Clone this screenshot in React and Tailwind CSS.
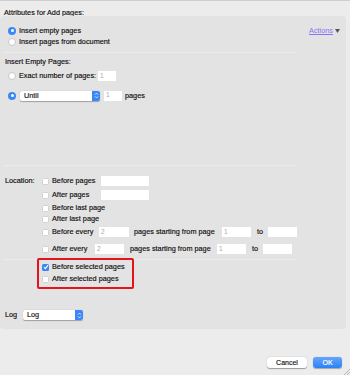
import React from "react";

const Radio = ({ on }) =>
  on ? (
    <span className="w-[8px] h-[8px] rounded-full bg-[#3b87f7] flex items-center justify-center shrink-0">
      <span className="w-[3px] h-[3px] rounded-full bg-white" />
    </span>
  ) : (
    <span className="w-[8px] h-[8px] rounded-full bg-white border border-[#c8c8c8] shrink-0" />
  );

const Check = ({ on }) =>
  on ? (
    <span className="w-[7px] h-[7px] rounded-[1.5px] bg-[#3b87f7] flex items-center justify-center shrink-0">
      <svg width="6" height="6" viewBox="0 0 6 6">
        <path d="M1 3.2 L2.4 4.6 L5 1.2" stroke="white" strokeWidth="1.1" fill="none" />
      </svg>
    </span>
  ) : (
    <span className="w-[7px] h-[7px] rounded-[1.5px] bg-white border border-[#d2d2d2] shrink-0" />
  );

const Field = ({ className, v }) => (
  <span className={"h-[10px] bg-white flex items-center pl-[2px] text-[#a8a8a8] text-[6.5px] [-webkit-text-stroke:0px] shrink-0 " + className}>
    {v}
  </span>
);

const Stepper = () => (
  <span className="w-[8px] h-full rounded-r-[2px] bg-[#3b87f7] flex items-center justify-center shrink-0">
    <svg width="5" height="7" viewBox="0 0 5 7">
      <path d="M1 2.6 L2.5 1.1 L4 2.6 M1 4.4 L2.5 5.9 L4 4.4" stroke="white" strokeWidth="0.8" fill="none" />
    </svg>
  </span>
);

const Select = ({ className, label }) => (
  <span className={"h-[10px] bg-white rounded-[2px] shadow-[0_0.5px_1px_rgba(0,0,0,0.3)] flex items-center shrink-0 " + className}>
    <span className="flex-1 pl-[4px] text-[#111]">{label}</span>
    <Stepper />
  </span>
);

const Row = ({ className, children }) => (
  <div className={"flex items-center h-[10px] " + (className || "")}>{children}</div>
);

export default function App() {
  return (
    <div className="w-[350px] h-[375px] bg-[#ececec] border-t border-[#cfcfcf] flex flex-col font-['Liberation_Sans',Arial,sans-serif] text-[7.3px] text-[#0d0d0d] [-webkit-text-stroke:0.15px] leading-none relative overflow-hidden">
      <div className="h-[15px] pl-[4px] pt-[8px]">Attributes for Add pages:</div>

      <div className="w-[346px] h-[313px] bg-[#e3e3e3] rounded-[4px] pl-[4px] pt-[9px] flex flex-col">
        <div className="flex justify-between pr-[6px]">
          <div className="flex flex-col">
            <div className="flex items-center h-[11px] pl-[4px] gap-[3px]">
              <Radio on />
              <span>Insert empty pages</span>
            </div>
            <div className="flex items-center h-[11px] pl-[4px] gap-[3px]">
              <Radio />
              <span>Insert pages from document</span>
            </div>
          </div>
          <div className="flex items-center h-[11px] gap-[2px]">
            <span className="text-[#8a72f3] underline [-webkit-text-stroke:0px]">Actions</span>
            <svg width="5" height="4" viewBox="0 0 5 4">
              <path d="M0 0 L5 0 L2.5 4 Z" fill="#555" />
            </svg>
          </div>
        </div>

        <div className="mt-[5px] h-px w-[293px] bg-[#ebebeb]" />

        <Row className="mt-[4px] pl-[1px]">Insert Empty Pages:</Row>

        <Row className="mt-[4px] pl-[4px]">
          <Radio />
          <span className="ml-[3px] w-[79px]">Exact number of pages:</span>
          <Field className="w-[18px]" v="1" />
        </Row>

        <div className="mt-[9px] h-[11px] flex items-center pl-[4px]">
          <Radio on />
          <Select className="ml-[4px] w-[80px]" label="Until" />
          <Field className="ml-[4px] w-[18px] text-[#111]" v="1" />
          <span className="ml-[3px]">pages</span>
        </div>

        <div className="mt-[64px] h-px w-[293px] bg-[#ebebeb]" />

        <div className="mt-[10px] flex">
          <Row className="w-[38px] pl-[1px] shrink-0">Location:</Row>
          <div className="flex flex-col">
            <Row>
              <Check />
              <span className="ml-[3px] w-[49px]">Before pages</span>
              <Field className="w-[48px]" v="" />
            </Row>
            <Row className="mt-[4px]">
              <Check />
              <span className="ml-[3px] w-[49px]">After pages</span>
              <Field className="w-[48px]" v="" />
            </Row>
            <Row className="mt-[3px]">
              <Check />
              <span className="ml-[3px]">Before last page</span>
            </Row>
            <Row className="mt-[1px]">
              <Check />
              <span className="ml-[3px]">After last page</span>
            </Row>
            <Row className="mt-[3px]">
              <Check />
              <span className="ml-[3px] w-[47px]">Before every</span>
              <Field className="w-[30px]" v="2" />
              <span className="ml-[5px] w-[88px]">pages starting from page</span>
              <Field className="w-[29px]" v="1" />
              <span className="ml-[6px] w-[11px]">to</span>
              <Field className="w-[29px]" v="" />
            </Row>
            <Row className="mt-[7px]">
              <Check />
              <span className="ml-[3px] w-[43px]">After every</span>
              <Field className="w-[29px]" v="2" />
              <span className="ml-[6px] w-[87px]">pages starting from page</span>
              <Field className="w-[29px]" v="1" />
              <span className="ml-[6px] w-[11px]">to</span>
              <Field className="w-[29px]" v="" />
            </Row>
          </div>
        </div>

        <div className="mt-[5px] h-px w-[293px] bg-[#ebebeb]" />

        <div className="flex flex-col pl-[38px]">
          <Row className="mt-[2px]">
            <Check on />
            <span className="ml-[3px]">Before selected pages</span>
          </Row>
          <Row className="mt-[2px]">
            <Check />
            <span className="ml-[3px]">After selected pages</span>
          </Row>
        </div>

        <Row className="mt-[26px] pl-[1px]">
          <span className="w-[18px]">Log</span>
          <Select className="w-[60px]" label="Log" />
        </Row>
      </div>

      <div className="mt-[28px] flex justify-end gap-[6px] pr-[8px]">
        <button className="w-[40px] h-[11px] bg-white rounded-[3px] shadow-[0_0.5px_1px_rgba(0,0,0,0.35)] text-[#111] text-[7px] leading-none flex items-center justify-center">
          Cancel
        </button>
        <button className="w-[29px] h-[11px] bg-gradient-to-b from-[#63a6fa] to-[#2c80f6] rounded-[3px] shadow-[0_0.5px_1px_rgba(0,0,0,0.3)] text-white text-[7px] leading-none flex items-center justify-center">
          OK
        </button>
      </div>

      <div className="absolute left-[37px] top-[257px] w-[97px] h-[31px] border-2 border-[#e5131d] rounded-[2px]" />

      <svg className="absolute right-0 bottom-0" width="8" height="8" viewBox="0 0 8 8">
        <path d="M8 2 L2 8 M8 5 L5 8" stroke="#a0a0a0" strokeWidth="0.7" />
      </svg>
    </div>
  );
}
